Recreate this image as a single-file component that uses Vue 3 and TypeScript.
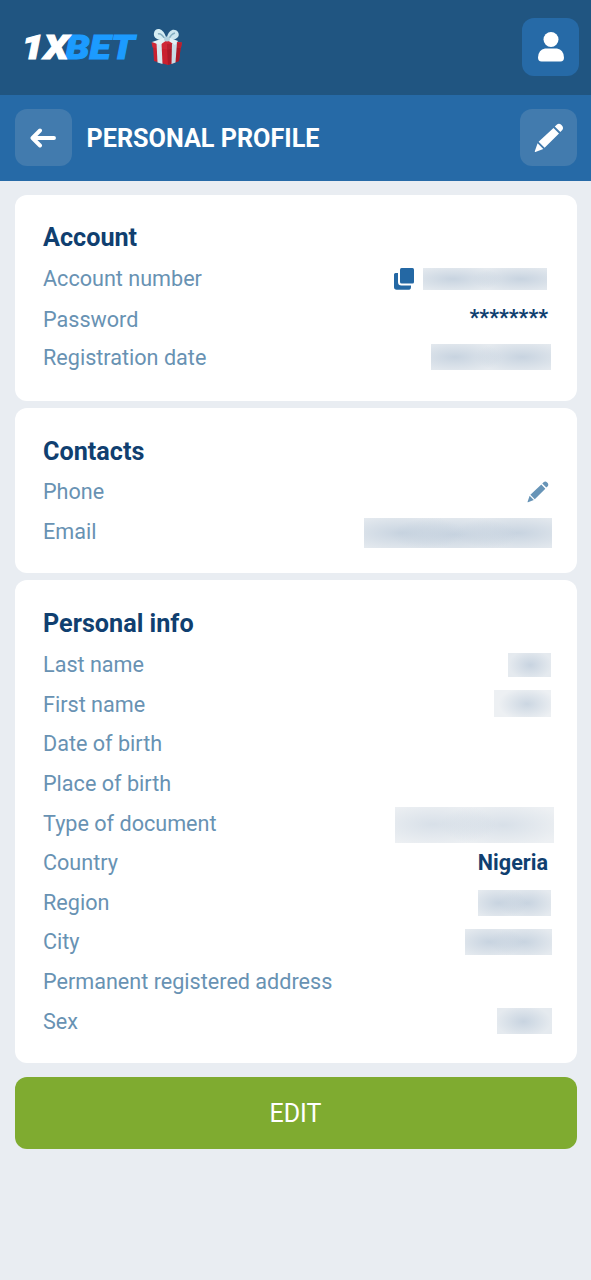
<script setup lang="ts">
interface Mask {
  width: number
  height: number
  right: number
  top?: number
  spots: [number, number][]
  tone?: number
}
interface Row {
  label: string
  value?: string
  mask?: Mask
  icon?: 'copy' | 'edit'
}
interface Section {
  id: string
  title: string
  rows: Row[]
}

const sections: Section[] = [
  {
    id: 'account',
    title: 'Account',
    rows: [
      { label: 'Account number', icon: 'copy', mask: { width: 124, height: 22, right: 1, spots: [[24, 50], [79, 50]] } },
      { label: 'Password', value: '********' },
      { label: 'Registration date', mask: { width: 120, height: 26, right: -3, spots: [[20, 50], [76, 50]] } },
    ],
  },
  {
    id: 'contacts',
    title: 'Contacts',
    rows: [
      { label: 'Phone', icon: 'edit' },
      { label: 'Email', mask: { width: 188, height: 30, right: -4, top: 1, spots: [[20, 50], [48, 55], [82, 50]] } },
    ],
  },
  {
    id: 'personal',
    title: 'Personal info',
    rows: [
      { label: 'Last name', mask: { width: 43, height: 24, right: -3, spots: [[52, 50]] } },
      { label: 'First name', mask: { width: 57, height: 27, right: -3, top: -1, spots: [[58, 52]], tone: 0.95 } },
      { label: 'Date of birth' },
      { label: 'Place of birth' },
      { label: 'Type of document', mask: { width: 159, height: 36, right: -6, top: 2, spots: [[24, 48], [68, 50]], tone: 0.6 } },
      { label: 'Country', value: 'Nigeria' },
      { label: 'Region', mask: { width: 73, height: 26, right: -3, top: 1, spots: [[28, 50], [68, 50]] } },
      { label: 'City', mask: { width: 87, height: 26, right: -3.5, spots: [[28, 50], [68, 50]] } },
      { label: 'Permanent registered address' },
      { label: 'Sex', mask: { width: 55, height: 26, right: -4, spots: [[48, 52]] } },
    ],
  },
]

function maskStyle(m: Mask) {
  const alpha = 0.75 * (m.tone ?? 1)
  const radius = m.spots.length > 2 ? 34 : m.spots.length > 1 ? 40 : 50
  const layers = m.spots.map(
    ([x, y]) => `radial-gradient(ellipse ${radius}% 62% at ${x}% ${y}%, rgba(190,204,219,${alpha}), rgba(190,204,219,0))`,
  )
  return {
    width: `${m.width}px`,
    height: `${m.height}px`,
    marginRight: `${m.right}px`,
    transform: `translateY(${m.top ?? 0}px)`,
    backgroundImage: layers.join(','),
    backgroundColor: m.tone ? '#edf0f3' : '#e5eaef',
  }
}
</script>

<template>
  <div class="page">
    <header class="topbar">
      <div class="brand">
        <svg class="logo" width="116" height="32" viewBox="0 0 116 32">
          <text class="logo-text blue" x="42.500" y="28" textLength="69" lengthAdjust="spacingAndGlyphs">BET</text>
          <text class="logo-text white" x="-1.500" y="28" textLength="47" lengthAdjust="spacingAndGlyphs">1X</text>
        </svg>
        <svg class="gift" width="34" height="38" viewBox="0 0 34 38">
          <path d="M3 17 17 20 31 17 29 33 18 37 4 33Z" fill="#c9202f" />
          <path d="M17 20 31 17 29 33 18 37Z" fill="#ac1929" />
          <path d="M1.500 14.500 17 12 32 14.500 31 19.500 17 21.500 2.500 19.500Z" fill="#cf2837" />
          <path d="M17 16 32 14.500 31 19.500 17 21.500Z" fill="#b9202f" />
          <path d="M6.500 14.500 11.500 15 12.500 36 7.500 34.500Z" fill="#d7e8ef" />
          <path d="M22 15.500 27 14.500 25.500 34.500 21.500 36Z" fill="#c8dde7" />
          <path d="M16 12C8 13 3 10 4 5 5-1 13-1 16 9Z" fill="#d5edf4" />
          <path d="M17 12C25 13 31 9 28 4 25 0 19 1 17 9Z" fill="#cce5ee" />
          <path d="M8 6Q11 5 15 11M25 5Q21 6 19 11" fill="none" stroke="#85aec1" stroke-width="1.500" />
          <path d="M14 10 2 14 10 17 17 12 25 17 28 13 20 10Z" fill="#e1f1f6" />
          <ellipse cx="17" cy="11" rx="3" ry="2.500" fill="#b2d2df" />
        </svg>
      </div>
      <button class="square user" aria-label="Profile">
        <svg width="28" height="32" viewBox="0 0 28 32">
          <circle cx="14" cy="8.500" r="7.500" fill="#fff" />
          <path d="M8 17.500H20Q26.500 18.500 27 26.500 27 30.500 23.500 30.500H4.500Q1 30.500 1 26.500 1.500 18.500 8 17.500Z" fill="#fff" />
        </svg>
      </button>
    </header>

    <div class="titlebar">
      <button class="square" aria-label="Back">
        <svg width="28" height="20" viewBox="0 0 28 20">
          <path d="M11 2.500 3.500 10 11 17.500M4 10H25" fill="none" stroke="#fff" stroke-width="3.900" stroke-linecap="round" stroke-linejoin="round" />
        </svg>
      </button>
      <h1>PERSONAL PROFILE</h1>
      <button class="square" aria-label="Edit profile">
        <svg width="30" height="30" viewBox="0 0 30 30">
          <path d="M20.800 3.500 23 1.500Q25-.1 27.500 2 30.100 4.500 28.300 7L26.300 9ZM19.500 4.900 25 10.400 10.600 24.800 4.600 18.800ZM3.600 20.200 9.300 26 1.400 28.900Q.5 29.100.8 28.200Z" fill="#fff" />
        </svg>
      </button>
    </div>

    <main class="content">
      <section v-for="section in sections" :key="section.id" class="card" :class="section.id">
        <h2>{{ section.title }}</h2>
        <div v-for="row in section.rows" :key="row.label" class="row">
          <span class="label">{{ row.label }}</span>
          <div class="value">
            <svg v-if="row.icon === 'copy'" class="copy" width="20" height="22" viewBox="0 0 20 22">
              <path d="M7.500 0H18.500Q20 0 20 1.500V14Q20 15.500 18.500 15.500H7.500Q6 15.500 6 14V1.500Q6 0 7.500 0Z" fill="#2468a4" />
              <path d="M4 5H1.500Q0 5 0 6.500V19Q0 21.700 2.700 21.700H15Q17 21.700 17 18.500V17.500H7.500Q4 17.500 4 14Z" fill="#2468a4" />
            </svg>
            <svg v-if="row.icon === 'edit'" class="pen" width="22" height="22" viewBox="0 0 30 30">
              <path d="M20.800 3.500 23 1.500Q25-.1 27.500 2 30.100 4.500 28.300 7L26.300 9ZM19.500 4.900 25 10.400 10.600 24.800 4.600 18.800ZM3.600 20.200 9.300 26 1.400 28.900Q.5 29.100.8 28.200Z" fill="#6794b7" />
            </svg>
            <strong v-if="row.value">{{ row.value }}</strong>
            <span v-if="row.mask" class="mask" :style="maskStyle(row.mask)"></span>
          </div>
        </div>
      </section>
      <button class="edit">EDIT</button>
    </main>
  </div>
</template>

<style>
body {
  margin: 0;
  background: #e9edf2;
}
</style>

<style scoped>
.page {
  width: 591px;
  height: 1280px;
  overflow: hidden;
  background: #e9edf2;
  font-family: Roboto, "Liberation Sans", sans-serif;
}
.page,
.page * {
  box-sizing: border-box;
}
button {
  border: 0;
  padding: 0;
  font-family: inherit;
}
svg {
  display: block;
  flex: none;
}
.topbar {
  display: flex;
  align-items: center;
  justify-content: space-between;
  height: 95px;
  padding: 0 12px 1px 23px;
  background: #205581;
}
.brand {
  display: flex;
  align-items: center;
  gap: 11px;
}
.logo {
  overflow: visible;
}
.logo-text {
  font: italic 900 34px Roboto, "Liberation Sans", sans-serif;
  stroke-width: 1.100px;
}
.white {
  fill: #fff;
  stroke: #fff;
}
.blue {
  fill: #1c9bff;
  stroke: #1c9bff;
}
.square {
  display: flex;
  align-items: center;
  justify-content: center;
  flex: none;
  width: 57px;
  height: 57px;
  border-radius: 12px;
  background: #427bae;
}
.user {
  height: 58px;
  background: #266aa7;
}
.titlebar {
  display: flex;
  align-items: center;
  height: 86px;
  padding: 0 14px 1px 14.500px;
  background: #266aa7;
}
h1 {
  flex: 1;
  margin: 2px 0 0 15px;
  color: #fff;
  font-size: 25.2px;
  font-weight: 700;
  line-height: 30px;
}
.content {
  display: flex;
  flex-direction: column;
  gap: 7px;
  padding: 14px 14.500px 0;
}
.card {
  padding: 0 28.500px;
  border-radius: 12px;
  background: #fff;
}
.account {
  height: 205.500px;
  padding-top: 28px;
}
.contacts {
  height: 165.500px;
  padding-top: 29.500px;
}
.personal {
  height: 483px;
  padding-top: 28.500px;
}
h2 {
  margin: 0;
  height: 36.200px;
  color: #103f70;
  font-size: 25.2px;
  font-weight: 700;
  line-height: 30px;
}
.contacts h2 {
  height: 34.500px;
}
.row {
  display: flex;
  align-items: center;
  justify-content: space-between;
  height: 39.650px;
  font-size: 21.6px;
}
.account .row {
  height: 39.300px;
}
.contacts .row {
  height: 40px;
}
.account .row:nth-child(3) .label {
  padding-top: 2px;
}
.account .row:nth-child(3) strong {
  padding-bottom: 2px;
}
.label {
  color: #6892b3;
  white-space: nowrap;
}
.value {
  display: flex;
  align-items: center;
}
strong {
  color: #103f70;
  font-weight: 700;
}
.copy {
  margin: 1px 9px 0 0;
}
.pen {
  margin: 1px -0.500px 0 0;
}
.mask {
  flex: none;
}
.edit {
  height: 72px;
  margin-top: 7px;
  border-radius: 12px;
  background: #7fab30;
  color: #fff;
  font-size: 25px;
}
</style>
